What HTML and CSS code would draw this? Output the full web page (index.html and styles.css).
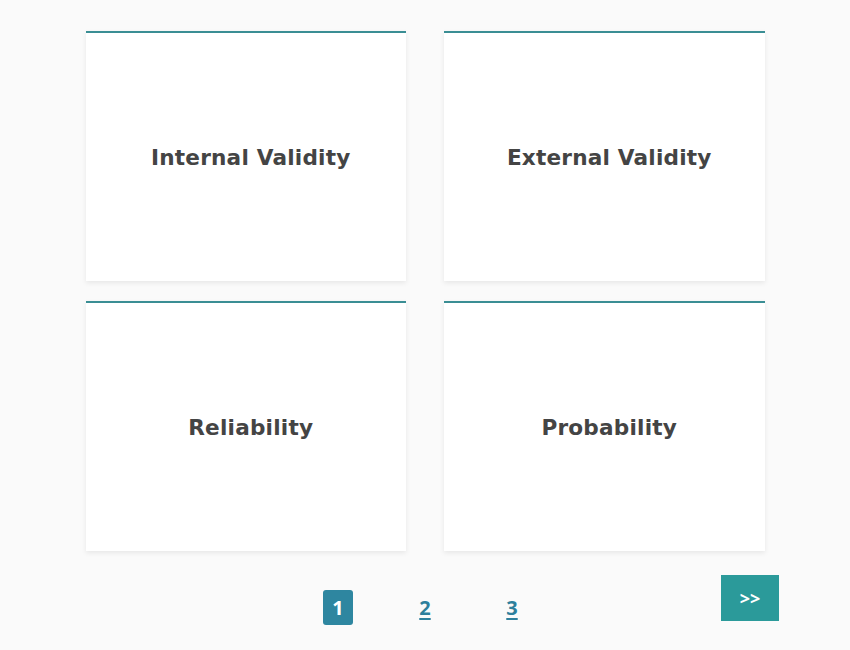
FILE: index.html
```html
<!DOCTYPE html>
<html lang="en">
<head>
    <meta charset="UTF-8">
    <meta name="viewport" content="width=device-width, initial-scale=1.0">
    <title>Topics</title>
    <link rel="stylesheet" href="styles.css">
</head>
<body>
    <div class="cards">
        <div class="card"><h2>Internal Validity</h2></div>
        <div class="card"><h2>External Validity</h2></div>
        <div class="card"><h2>Reliability</h2></div>
        <div class="card"><h2>Probability</h2></div>
    </div>

    <div class="pager">
        <div class="pages">
            <span class="page current">1</span>
            <a href="#" class="page">2</a>
            <a href="#" class="page">3</a>
        </div>
        <button class="next-btn">&gt;&gt;</button>
    </div>
</body>
</html>
```
FILE: styles.css
```css
body { margin: 0; background-color: #fafafa; font-family: "Open Sans", Arial, sans-serif; }
.cards { width: 679px; margin: 31px auto 0; display: grid; grid-template-columns: 1fr 1fr; column-gap: 38px; row-gap: 20px; }
.card { height: 250px; box-sizing: border-box; background: white; border-top: 2px solid #3a8e94; box-shadow: 0 2px 5px rgba(0, 0, 0, 0.08); display: flex; align-items: center; justify-content: center; padding-left: 10px; }
.card h2 { margin: 0; font-family: "DejaVu Sans", sans-serif; font-weight: 700; font-size: 21.6px; color: #444; letter-spacing: 0.2px; }
.pager { display: grid; grid-template-columns: 1fr auto 1fr; align-items: start; padding: 24px 71px 0; }
.pages { grid-column: 2; display: flex; gap: 57px; margin-top: 15px; }
.page { width: 30px; height: 35px; line-height: 35px; text-align: center; font-size: 20px; font-weight: 700; color: #2e7f9c; text-decoration: underline; text-underline-offset: 3px; }
.page.current { background-color: #2e86a0; color: white; border-radius: 3px; text-decoration: none; }
.next-btn { grid-column: 3; justify-self: end; width: 58px; height: 46px; border: none; background-color: #2b9a9a; color: white; font-family: "Open Sans", Arial, sans-serif; font-size: 18px; font-weight: 700; cursor: pointer; }
```
